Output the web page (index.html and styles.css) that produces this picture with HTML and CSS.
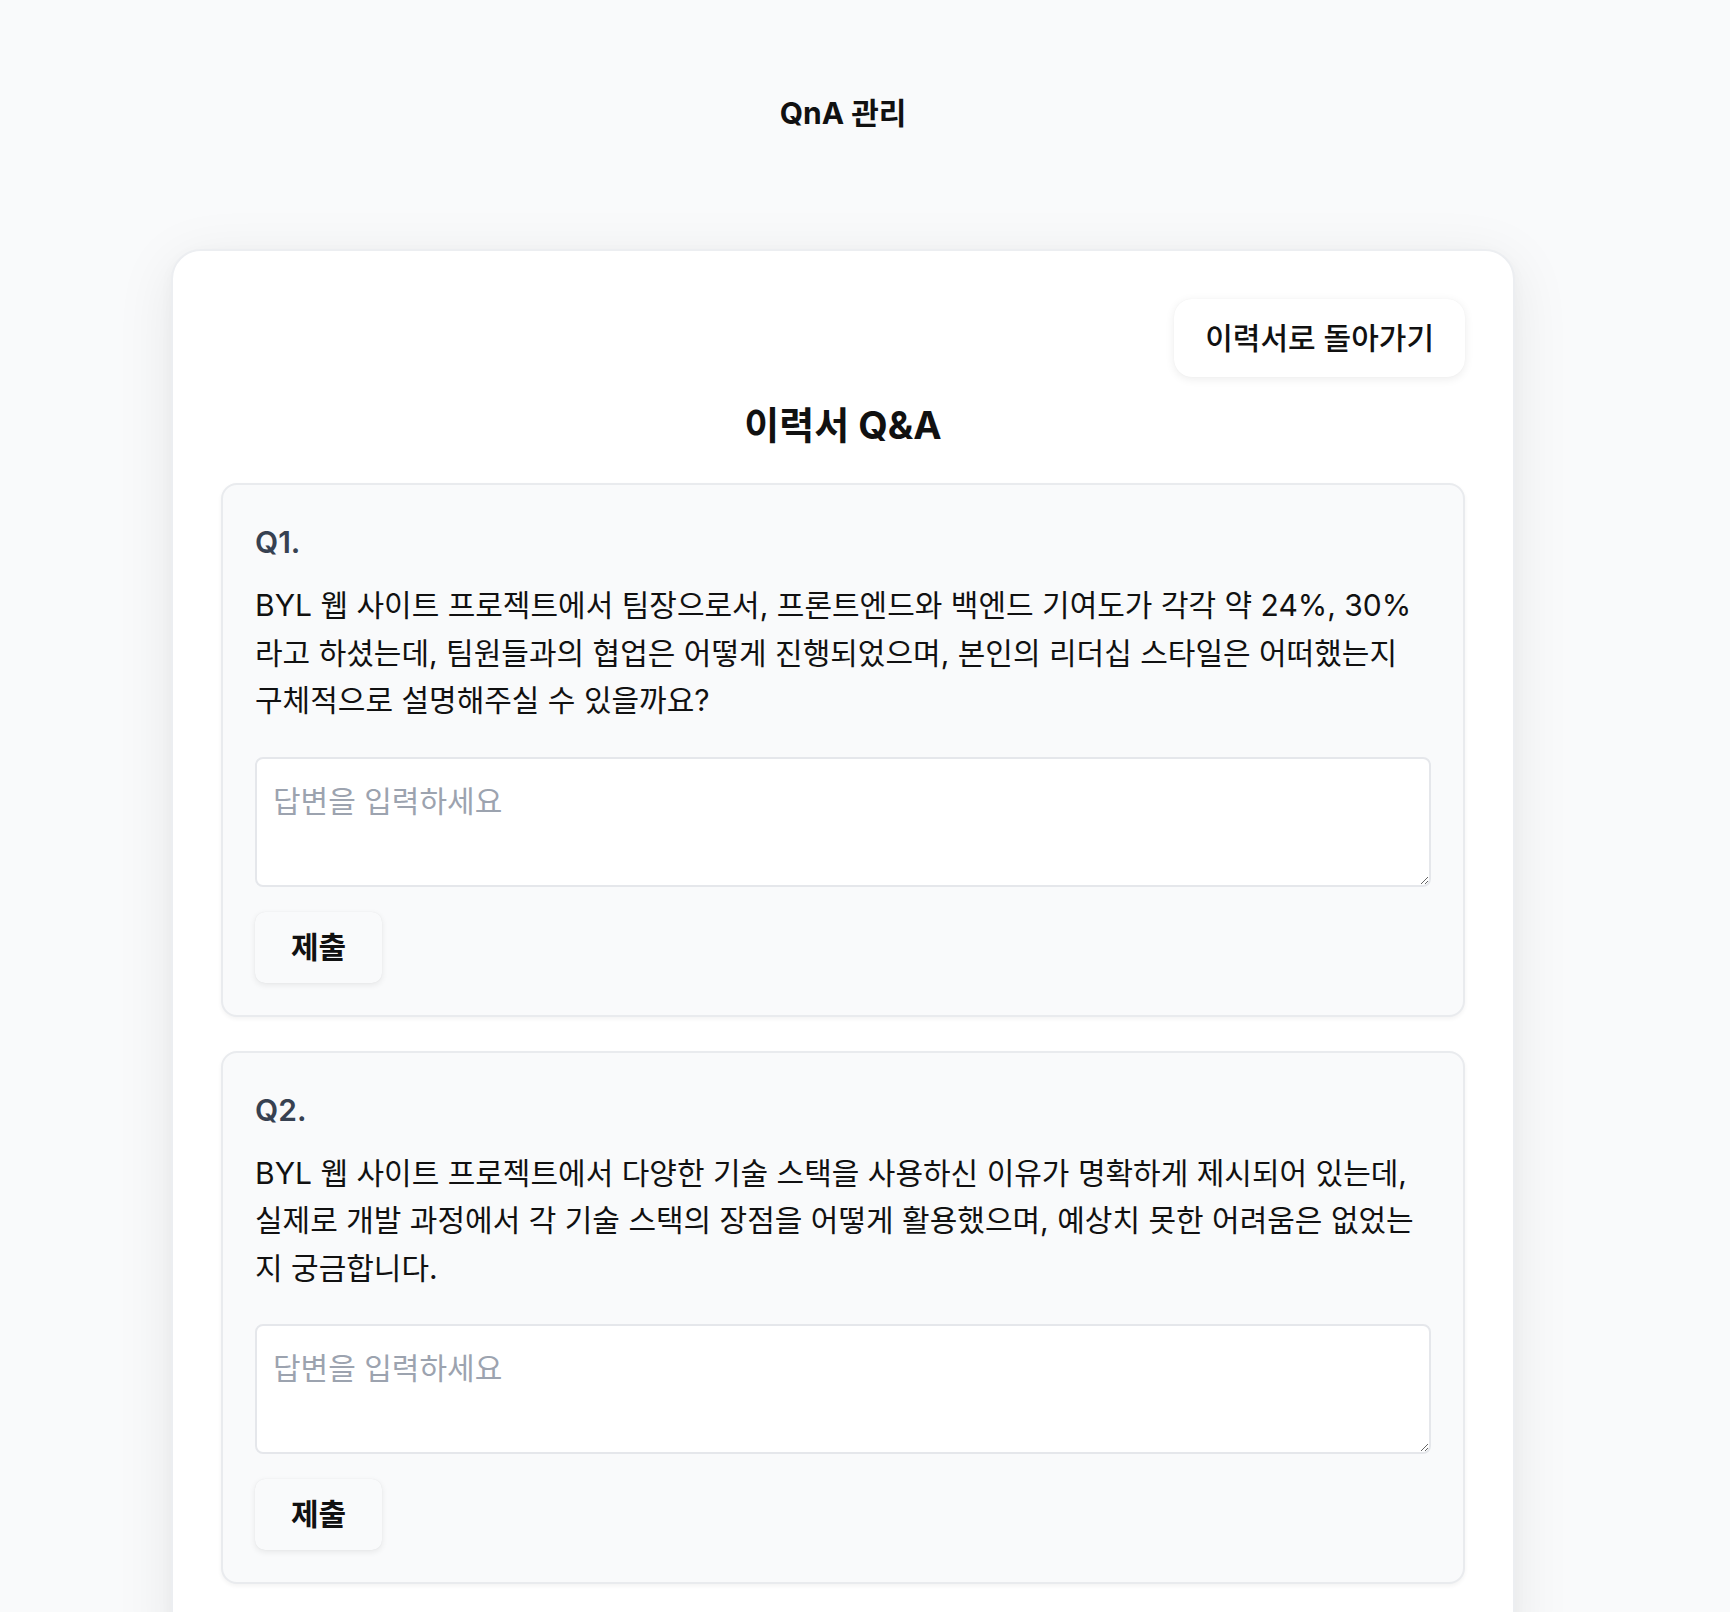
FILE: index.html
```html
<!DOCTYPE html>
<html lang="ko">
<head>
  <meta charset="utf-8">
  <title>QnA 관리</title>
  <link rel="stylesheet" href="styles.css">
</head>
<body>

<div class="page">
  <h1 class="page-title">QnA 관리</h1>

  <div class="card">
    <div class="card-top">
      <button class="back-btn" type="button">이력서로 돌아가기</button>
    </div>
    <h2 class="card-title">이력서 Q&amp;A</h2>

    <div class="qna">
      <div class="qna-label">Q1.</div>
      <p class="qna-text">BYL 웹 사이트 프로젝트에서 팀장으로서, 프론트엔드와 백엔드 기여도가 각각 약 24%, 30% 라고 하셨는데, 팀원들과의 협업은 어떻게 진행되었으며, 본인의 리더십 스타일은 어떠했는지 구체적으로 설명해주실 수 있을까요?</p>
      <textarea class="answer" placeholder="답변을 입력하세요"></textarea>
      <button class="submit-btn" type="button">제출</button>
    </div>

    <div class="qna">
      <div class="qna-label">Q2.</div>
      <p class="qna-text">BYL 웹 사이트 프로젝트에서 다양한 기술 스택을 사용하신 이유가 명확하게 제시되어 있는데, 실제로 개발 과정에서 각 기술 스택의 장점을 어떻게 활용했으며, 예상치 못한 어려움은 없었는지 궁금합니다.</p>
      <textarea class="answer" placeholder="답변을 입력하세요"></textarea>
      <button class="submit-btn" type="button">제출</button>
    </div>
  </div>
</div>

</body>
</html>
```

FILE: styles.css
```css
body {
  margin: 0;
  background-color: #f9fafb;
  color: #111111;
  font-family: "Inter", "Noto Sans CJK KR", sans-serif;
}
.page {
  padding: 93px 44px 60px 0;
}
.page-title {
  margin: 0 0 116px;
  font-size: 30px;
  line-height: 40px;
  font-weight: 700;
  text-align: center;
}
.card {
  width: 1344px;
  box-sizing: border-box;
  margin: 0 auto;
  padding: 48px;
  background-color: #ffffff;
  border: 2px solid #eceef1;
  border-radius: 30px;
  box-shadow: 0 12px 60px rgba(0, 0, 0, 0.08), 0 4px 14px rgba(0, 0, 0, 0.03);
}
.card-top {
  display: flex;
  justify-content: flex-end;
}
.back-btn {
  padding: 19px 31px;
  font-family: inherit;
  font-size: 30px;
  line-height: 40px;
  font-weight: 500;
  color: #111111;
  background-color: #ffffff;
  border: none;
  border-radius: 18px;
  box-shadow: 0 2px 10px rgba(0, 0, 0, 0.08), 0 0 1px rgba(0, 0, 0, 0.06);
  cursor: pointer;
}
.card-title {
  margin: 24px 0 34px;
  font-size: 38px;
  line-height: 48px;
  font-weight: 700;
  text-align: center;
}
.qna {
  padding: 32px;
  background-color: #f9fafb;
  border: 2px solid #e9ebee;
  border-radius: 16px;
  box-shadow: 0 2px 4px rgba(0, 0, 0, 0.05);
  margin-bottom: 34px;
}
.qna-label {
  margin-top: 5px;
  font-size: 30px;
  line-height: 40px;
  font-weight: 600;
  color: #374151;
}
.qna-text {
  margin: 20px 0 32px;
  font-size: 30px;
  line-height: 47.5px;
}
.answer {
  display: block;
  width: 100%;
  height: 130px;
  box-sizing: border-box;
  padding: 22px 16px;
  font-family: inherit;
  font-size: 30px;
  line-height: 40px;
  color: #111111;
  background-color: #ffffff;
  border: 2px solid #e5e7eb;
  border-radius: 8px;
}
.answer::placeholder {
  color: #9ca3af;
}
.submit-btn {
  margin-top: 25px;
  padding: 15px 36px;
  font-family: inherit;
  font-size: 30px;
  line-height: 41px;
  font-weight: 700;
  color: #111111;
  background-color: #f9fafb;
  border: none;
  border-radius: 10px;
  box-shadow: 0 2px 6px rgba(0, 0, 0, 0.08), 0 0 1px rgba(0, 0, 0, 0.08);
  cursor: pointer;
}
```
